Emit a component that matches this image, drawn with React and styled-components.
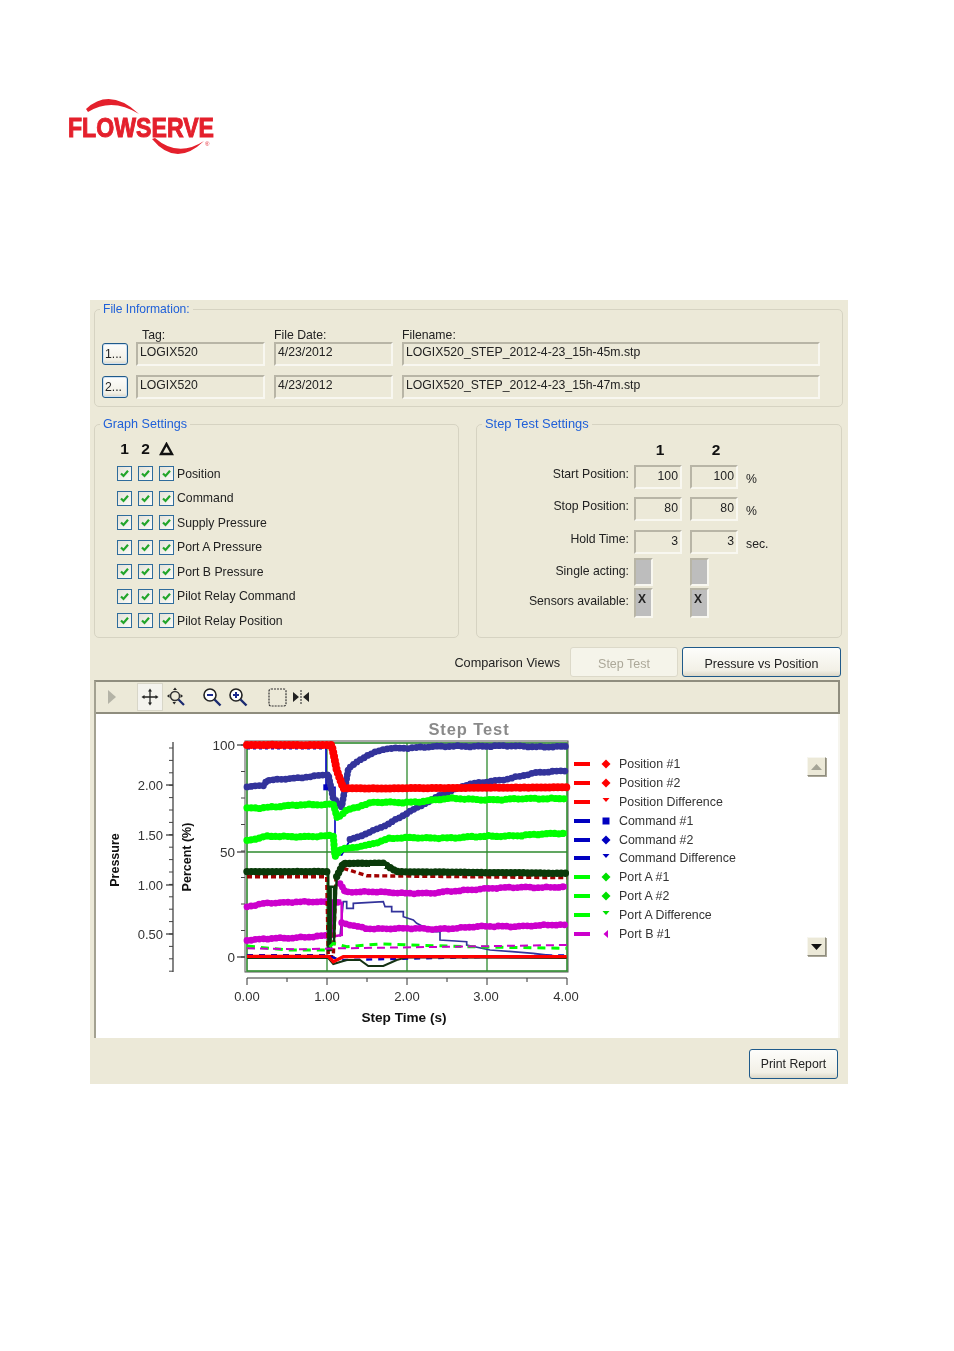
import React from "react";
import styled, { createGlobalStyle } from "styled-components";

const GlobalStyle = createGlobalStyle`
  html, body { margin: 0; padding: 0; background: #fff; }
  body { font-family: "Liberation Sans", Arial, sans-serif; color: #222; }
`;

const Page = styled.div`
  width: 954px;
  height: 1351px;
  overflow: hidden;
  filter: blur(0.35px);
`;

const Header = styled.header`
  height: 300px;
  padding: 98px 0 0 66px;
  box-sizing: border-box;
`;

const Panel = styled.main`
  width: 758px;
  height: 784px;
  margin-left: 90px;
  padding: 1px 5px 0 4px;
  box-sizing: border-box;
  background: #ece9d8;
  font-size: 12.25px;
`;

const Group = styled.fieldset`
  margin: 0;
  padding: 0;
  min-width: 0;
  box-sizing: border-box;
  border: 1.5px solid #d6d3c2;
  border-radius: 5px;
  width: ${(p) => p.$width || "auto"};
  height: ${(p) => p.$height};
`;

const GroupTitle = styled.legend`
  margin-left: 5px;
  padding: 0 3px 0 3px;
  font-size: ${(p) => p.$size || 12.6}px;
  line-height: 16px;
  color: #2060d8;
`;

const FileRows = styled.div`
  display: flex;
  flex-direction: column;
  gap: 9px;
  padding: 11px 0 0 7px;
`;

const FileGrid = styled.div`
  display: grid;
  grid-template-columns: 25px 129px 119px 418px;
  column-gap: 9px;
  align-items: center;
`;

const FileHead = styled(FileGrid)`
  height: 15px;
  margin-bottom: -10px;
  line-height: 15px;
`;

const HeadCell = styled.span`
  padding-left: ${(p) => p.$indent || 0}px;
`;

const Sunken = styled.div`
  box-sizing: border-box;
  border: 2px solid;
  border-color: #b8b5a6 #f8f7f0 #f8f7f0 #b8b5a6;
  background: #ece9d8;
`;

const FileField = styled(Sunken)`
  height: 24px;
  padding: 1px 0 0 2px;
  line-height: 15px;
  white-space: nowrap;
`;

const Button = styled.button`
  box-sizing: border-box;
  padding: 0;
  font: inherit;
  color: #222;
  background: linear-gradient(#fdfdfb, #f2f0e6 80%, #dcd8c8);
  border: 1.5px solid #1f5a8a;
  border-radius: 3px;
  width: ${(p) => p.$width}px;
  height: ${(p) => p.$height}px;
`;

const PickButton = styled(Button)`
  text-align: left;
  padding-left: 2px;
  box-shadow: inset 0 0 0 1px #cfe0f2;
`;

const ViewButton = styled(Button)`
  padding-top: 3px;
  font-size: 12.5px;
`;

const DisabledButton = styled(ViewButton)`
  color: #aca899;
  background: #f5f4ea;
  border-color: #dcd9c9;
`;

const SettingsRow = styled.div`
  display: flex;
  gap: 17px;
  margin-top: 9px;
`;

const CheckList = styled.div`
  padding: 5px 0 0 22px;
`;

const CheckRow = styled.div`
  display: flex;
  align-items: center;
  height: 24.5px;
`;

const ColHead = styled.b`
  width: 15px;
  margin-right: 6px;
  text-align: center;
  font-size: 15.5px;
  color: #111;
`;

const CheckBox = styled.span`
  box-sizing: border-box;
  width: 15px;
  height: 15px;
  margin-right: ${(p) => (p.$last ? 3 : 6)}px;
  display: flex;
  align-items: center;
  justify-content: center;
  border: 1.5px solid #2f6c9c;
  background: linear-gradient(135deg, #e4e2d8, #fbfbf8);
`;

const StepGrid = styled.div`
  display: grid;
  grid-template-columns: 152px 53px 56px auto;
  grid-template-rows: 27px 32px 33px 28px 30px;
  padding-top: 6px;
`;

const StepHead = styled.b`
  grid-column: ${(p) => p.$col};
  justify-self: end;
  width: 48px;
  padding-left: 4px;
  box-sizing: border-box;
  text-align: center;
  font-size: 15.5px;
  line-height: 24px;
  color: #111;
`;

const StepLabel = styled.span`
  grid-column: 1;
  text-align: right;
  line-height: 17px;
  padding-top: ${(p) => p.$top || 1}px;
`;

const StepField = styled(Sunken)`
  justify-self: end;
  width: 48px;
  height: 24px;
  text-align: right;
  padding: 1px 2px 0 0;
  line-height: 16px;
`;

const FlagField = styled(Sunken)`
  justify-self: start;
  margin-left: 5px;
  width: 19px;
  height: ${(p) => p.$height}px;
  background: #bdbdbd;
  font-weight: bold;
  font-size: 12px;
  line-height: 18px;
  padding-left: 2px;
`;

const FlagFieldAlt = styled(FlagField)`
  margin-left: 8px;
`;

const Unit = styled.span`
  padding-left: 8px;
  line-height: 28px;
`;

const ViewsRow = styled.div`
  display: flex;
  justify-content: flex-end;
  align-items: center;
  gap: 4px;
  margin-top: 9px;
  padding-right: 2px;
`;

const ViewsLabel = styled.span`
  margin: 2px 6px 0 0;
  font-size: 12.7px;
`;

const ChartFrame = styled.section`
  box-sizing: border-box;
  width: 746px;
  height: 358px;
  margin-top: 3px;
  border-left: 2px solid #a3a191;
  border-top: 2px solid #8f8d7e;
`;

const Toolbar = styled.div`
  box-sizing: border-box;
  height: 32px;
  display: flex;
  align-items: center;
  padding-left: 4px;
  border-bottom: 2px solid #8f8d7e;
  border-right: 2px solid #8f8d7e;
`;

const ToolSlot = styled.span`
  width: ${(p) => p.$width || 24}px;
  height: 28px;
  margin-left: ${(p) => p.$gap || 0}px;
  display: flex;
  align-items: center;
  justify-content: center;
  background: ${(p) => (p.$active ? "#f4f3ee" : "transparent")};
  border: ${(p) => (p.$active ? "1px solid #d8d6c8" : "none")};
  box-sizing: border-box;
`;

const ChartBody = styled.div`
  box-sizing: border-box;
  height: 324px;
  display: flex;
  background: #fff;
  border-right: 2px solid #f6f5ee;
`;

const ChartSvg = styled.svg`
  display: block;
  width: 486px;
  height: 324px;
  flex: none;
  font-family: "Liberation Sans", Arial, sans-serif;
`;

const Legend = styled.ul`
  list-style: none;
  margin: 0 0 0 -8px;
  padding: 40.5px 0 0;
  width: 233px;
  flex: none;
`;

const LegendRow = styled.li`
  display: flex;
  align-items: center;
  height: 18.9px;
  font-size: 12.4px;
  color: #333;
`;

const Swatch = styled.span`
  width: 16px;
  height: 4px;
  background: ${(p) => p.$color};
  flex: none;
`;

const MarkerSlot = styled.span`
  width: 16px;
  margin: 0 5px 0 8px;
  display: flex;
  justify-content: center;
`;

const ScrollColumn = styled.div`
  display: flex;
  flex-direction: column;
  justify-content: space-between;
  box-sizing: border-box;
  height: 324px;
  padding: 43px 0 82px;
`;

const ScrollButton = styled.span`
  box-sizing: border-box;
  width: 19px;
  height: 19px;
  display: flex;
  align-items: center;
  justify-content: center;
  background: #ece9d8;
  border: 1px solid;
  border-color: #f7f6ef #8f8d7e #8f8d7e #f7f6ef;
  box-shadow: 1px 1px 0 #aca899;
`;

const Footer = styled.div`
  display: flex;
  justify-content: flex-end;
  padding: 11px 5px 0 0;
`;

const Logo = () => (
  <svg width="190" height="60" viewBox="66 98 190 60">
    <path d="M86 109 Q110 87 139 114 Q112 97 88 112 Z" fill="#e4202c" />
    <path d="M152 139 Q176 168 204 141 Q178 158 155 138 Z" fill="#e4202c" />
    <text x="68" y="137" fontFamily="Liberation Sans" fontWeight="bold" fontSize="28" fill="#e4202c" stroke="#e4202c" strokeWidth="1" textLength="146" lengthAdjust="spacingAndGlyphs">FLOWSERVE</text>
    <text x="205" y="146" fontFamily="Liberation Sans" fontSize="6" fill="#e4202c">®</text>
  </svg>
);

const Check = () => (
  <svg width="11" height="11" viewBox="0 0 11 11">
    <path d="M2 5.5 L4.5 8 L9 2.8" fill="none" stroke="#22a52a" strokeWidth="2.2" />
  </svg>
);

const Delta = () => (
  <svg width="15" height="14" viewBox="0 0 15 14">
    <path d="M7.5 2 L13 12 H2 Z" fill="none" stroke="#111" strokeWidth="2.4" />
  </svg>
);

const PlayIcon = () => (
  <svg width="10" height="16" viewBox="0 0 10 16"><path d="M1 1 L9 8 L1 15 Z" fill="#b4b3a6" /></svg>
);

const PanIcon = () => (
  <svg width="18" height="18" viewBox="0 0 18 18">
    <path d="M9 2 V16 M2 9 H16" stroke="#222" strokeWidth="1.3" />
    <path d="M9 0.5 L11 3.5 H7 Z M9 17.5 L7 14.5 H11 Z M0.5 9 L3.5 7 V11 Z M17.5 9 L14.5 11 V7 Z" fill="#222" />
  </svg>
);

const AutoIcon = () => (
  <svg width="20" height="20" viewBox="0 0 20 20">
    <circle cx="9" cy="9" r="4.5" fill="none" stroke="#333" strokeWidth="1.5" />
    <path d="M12.5 12.5 L18 18" stroke="#1a2a70" strokeWidth="2.2" />
    <path d="M9 0.5 L11 3 H7 Z M1 9 L3.5 7 V11 Z M17 9 L14.5 11 V7 Z M6.5 15 H10 L8.2 17.5 Z" fill="#222" />
  </svg>
);

const ZoomIcon = ({ plus }) => (
  <svg width="20" height="20" viewBox="0 0 20 20">
    <circle cx="8" cy="8" r="6" fill="#fff" stroke="#222" strokeWidth="1.6" />
    <path d="M12.5 12.5 L18.5 18.5" stroke="#1a2a70" strokeWidth="2.4" />
    <path d={plus ? "M5 8 H11 M8 5 V11" : "M5 8 H11"} stroke="#1a2a90" strokeWidth="2" />
  </svg>
);

const BoxIcon = () => (
  <svg width="19" height="19" viewBox="0 0 19 19">
    <rect x="1" y="1" width="17" height="17" rx="2" fill="none" stroke="#333" strokeWidth="1.2" strokeDasharray="2 1" />
  </svg>
);

const SplitIcon = () => (
  <svg width="18" height="14" viewBox="0 0 18 14">
    <path d="M1 2 L7 7 L1 12 Z M17 2 L11 7 L17 12 Z" fill="#222" />
    <path d="M9 0 V14" stroke="#444" strokeWidth="1.2" strokeDasharray="2 1" />
  </svg>
);

const Marker = ({ kind, color }) => {
  const shapes = {
    diamond: "M5 0.5 L9.5 5 L5 9.5 L0.5 5 Z",
    square: "M1.5 1.5 H8.5 V8.5 H1.5 Z",
    down: "M1.5 1 H8.5 L5 5 Z",
    left: "M7 1 V9 L2.5 5 Z",
  };
  return (
    <svg width="10" height="10" viewBox="0 0 10 10"><path d={shapes[kind]} fill={color} /></svg>
  );
};

const ChevronUp = ({ color }) => (
  <svg width="11" height="6" viewBox="0 0 11 6"><path d="M5.5 0 L11 6 H0 Z" fill={color} /></svg>
);

const ChevronDown = ({ color }) => (
  <svg width="11" height="6" viewBox="0 0 11 6"><path d="M5.5 6 L11 0 H0 Z" fill={color} /></svg>
);

// zoomed crop coordinates of the plot, mapped back to the page
const px = (x) => 200 + x / 3;
const py = (y) => 730 + y / 3;

const wobble = (x, seed) =>
  Math.sin(x * 0.31 + seed) * 0.5 + Math.sin(x * 0.83 + seed * 2) * 0.4 + Math.sin(x * 0.09 + seed * 3) * 0.5;

const pathOf = (pts, seed, amp) => {
  const out = [];
  for (let i = 0; i < pts.length - 1; i++) {
    const [x1, y1] = pts[i];
    const [x2, y2] = pts[i + 1];
    const steps = Math.max(1, Math.round(Math.abs(x2 - x1) / 9));
    for (let s = 0; s < steps; s++) {
      const t = s / steps;
      const x = px(x1 + (x2 - x1) * t);
      const y = py(y1 + (y2 - y1) * t);
      out.push(`${x.toFixed(1)},${(y + wobble(x, seed) * amp).toFixed(1)}`);
    }
  }
  const last = pts[pts.length - 1];
  out.push(`${px(last[0]).toFixed(1)},${py(last[1]).toFixed(1)}`);
  return out.join(" ");
};

const Thick = ({ pts, color, seed = 1, width = 5, amp = 0.8 }) => {
  const line = pathOf(pts, seed, amp);
  return (
    <g fill="none" stroke={color} strokeLinejoin="round">
      <polyline points={line} strokeWidth={width} />
      <polyline points={line} strokeWidth={width + 1.8} strokeLinecap="round" strokeDasharray="0 4.2" />
    </g>
  );
};

const Thin = ({ pts, color, width = 1.3, dash }) => (
  <polyline
    points={pts.map(([x, y]) => `${px(x).toFixed(1)},${py(y).toFixed(1)}`).join(" ")}
    fill="none"
    stroke={color}
    strokeWidth={width}
    strokeDasharray={dash}
  />
);

const RED = "#ff0000";
const NAVY = "#33339b";
const BLUE = "#0000c0";
const GREEN = "#00ff00";
const PURPLE = "#cc00cc";
const FOREST = "#0a3a0a";
const GRID = "#2e8b2e";

const Chart = () => {
  const pctTicks = Array.from({ length: 9 }, (_, i) => 745 + i * 26.5);
  const pressTicks = Array.from({ length: 19 }, (_, i) => 748 + i * 12.4).filter((y) => y < 973);
  const timeTicks = Array.from({ length: 9 }, (_, i) => 247 + i * 40);
  return (
    <ChartSvg viewBox="96 714 486 324">
      <text x="469" y="735" textAnchor="middle" fontSize="16.5" fontWeight="bold" fill="#8a8a8a" letterSpacing="0.9">Step Test</text>

      {/* pressure axis */}
      <path d="M173 742 V972" stroke="#333" strokeWidth="1.2" />
      {pressTicks.map((y) => (
        <path key={y} d={`M169 ${y} H173`} stroke="#444" strokeWidth="1" />
      ))}
      {[["2.00", 785], ["1.50", 835], ["1.00", 885], ["0.50", 934]].map(([label, y]) => (
        <g key={label}>
          <path d={`M166 ${y} H173`} stroke="#333" strokeWidth="1.2" />
          <text x="163" y={y + 5} textAnchor="end" fontSize="13" fill="#333">{label}</text>
        </g>
      ))}
      <text transform="translate(119 860) rotate(-90)" textAnchor="middle" fontSize="12.5" fontWeight="bold" fill="#111">Pressure</text>
      <text transform="translate(191 857) rotate(-90)" textAnchor="middle" fontSize="12.5" fontWeight="bold" fill="#111">Percent (%)</text>

      {/* percent axis */}
      {pctTicks.map((y) => (
        <path key={y} d={`M241 ${y} H245`} stroke="#444" strokeWidth="1" />
      ))}
      {[["100", 745], ["50", 852], ["0", 957]].map(([label, y]) => (
        <g key={label}>
          <path d={`M237 ${y} H245`} stroke="#333" strokeWidth="1.2" />
          <text x="235" y={y + 5} textAnchor="end" fontSize="13.5" fill="#333">{label}</text>
        </g>
      ))}

      {/* plot frame */}
      <rect x="245" y="741" width="323" height="231" fill="#fff" stroke="#555" strokeWidth="1" />
      <rect x="247" y="743" width="320" height="228" fill="none" stroke={GRID} strokeWidth="1.6" />
      <path d="M327 743 V971 M407 743 V971 M487 743 V971 M247 852 H567" stroke={GRID} strokeWidth="1.3" fill="none" />

      {/* time axis */}
      <path d="M247 978 H567" stroke="#333" strokeWidth="1" />
      {timeTicks.map((x) => (
        <path key={x} d={`M${x} 978 V${(x - 247) % 80 === 0 ? 985 : 982}`} stroke="#333" strokeWidth="1" />
      ))}
      {[["0.00", 247], ["1.00", 327], ["2.00", 407], ["3.00", 486], ["4.00", 566]].map(([label, x]) => (
        <text key={label} x={x} y="1001" textAnchor="middle" fontSize="13" fill="#333">{label}</text>
      ))}
      <text x="404" y="1022" textAnchor="middle" fontSize="13.6" fontWeight="bold" fill="#111">Step Time (s)</text>

      {/* traces */}
      <Thin pts={[[378, 50], [378, 172], [405, 172], [405, 370], [425, 375], [450, 330]]} color={BLUE} width={1.6} />
      <Thin pts={[[141, 53], [378, 53]]} color={BLUE} width={3.4} dash="3 3" />
      <Thin pts={[[370, 172], [400, 172]]} color={BLUE} width={6} />
      <Thick seed={1} pts={[[141, 170], [190, 165], [200, 150], [300, 145], [385, 132], [400, 205], [425, 230], [445, 115], [500, 78], [560, 55], [800, 48], [1100, 50]]} color={NAVY} />
      <Thick seed={2} pts={[[450, 330], [570, 280], [640, 240], [720, 195], [800, 165], [900, 150], [1000, 130], [1100, 122]]} color={NAVY} />
      <Thin pts={[[420, 620], [430, 515], [440, 515], [440, 535], [460, 535], [460, 520], [550, 515], [555, 530], [575, 530], [575, 545], [610, 545], [610, 560], [640, 570], [650, 580], [700, 605], [720, 605], [720, 630], [800, 635], [800, 645], [870, 660], [1000, 670], [1100, 682]]} color={NAVY} width={1.7} />
      <Thick seed={3} pts={[[141, 235], [250, 228], [400, 222], [412, 262], [440, 240], [520, 218], [660, 215], [760, 205], [900, 210], [1000, 205], [1100, 205]]} color={GREEN} width={5.4} />
      <Thick seed={4} pts={[[141, 332], [200, 320], [400, 318], [405, 380], [420, 360], [500, 345], [570, 325], [800, 322], [1100, 310]]} color={GREEN} width={5.4} />
      <Thick seed={5} pts={[[141, 530], [200, 518], [425, 515]]} color={PURPLE} width={5} />
      <Thick seed={5} pts={[[420, 460], [435, 485], [700, 490], [850, 475], [1100, 470]]} color={PURPLE} width={5} />
      <Thin pts={[[395, 515], [395, 620], [425, 615], [425, 515]]} color={PURPLE} width={2.6} />
      <Thick seed={6} pts={[[141, 630], [250, 625], [400, 615]]} color={PURPLE} width={5} />
      <Thick seed={6} pts={[[425, 580], [500, 595], [700, 597], [850, 590], [1100, 585]]} color={PURPLE} width={5} />
      <Thin pts={[[141, 440], [380, 440], [385, 680], [400, 680], [408, 440], [430, 415], [500, 437], [1100, 443]]} color="#a00000" width={3.4} dash="5 3" />
      <Thick seed={7} amp={0.2} width={5.6} pts={[[141, 425], [385, 425]]} color={FOREST} />
      <Thin pts={[[385, 425], [385, 660], [392, 660], [392, 470], [402, 470], [402, 640], [410, 440]]} color={FOREST} width={2.4} />
      <Thick seed={7} amp={0.2} width={5.6} pts={[[410, 440], [430, 400], [550, 400], [590, 425], [1100, 430]]} color={FOREST} />
      <Thin pts={[[510, 411], [555, 411]]} color="#fff" width={2} />
      <Thin pts={[[141, 648], [260, 660], [380, 660], [400, 640], [440, 650], [540, 642], [800, 650], [1100, 655]]} color={GREEN} width={3} dash="8 6" />
      <Thin pts={[[141, 655], [300, 658], [420, 655], [1100, 645]]} color={PURPLE} width={2} dash="8 5" />
      <Thin pts={[[141, 676], [380, 676], [420, 690], [1100, 676]]} color={BLUE} width={2.4} dash="6 6" />
      <Thin pts={[[141, 684], [385, 684], [400, 702], [440, 690], [480, 690], [505, 708], [550, 708], [590, 690], [620, 682], [1100, 684]]} color="#143214" width={2} />
      <Thin pts={[[141, 679], [385, 679], [400, 695], [430, 680], [1100, 680]]} color={RED} width={3.2} />
      <Thick seed={8} amp={0.15} width={6.2} pts={[[141, 45], [395, 45], [410, 120], [430, 175], [560, 175], [1100, 172]]} color={RED} />
    </ChartSvg>
  );
};

const checks = [
  "Position",
  "Command",
  "Supply Pressure",
  "Port A Pressure",
  "Port B Pressure",
  "Pilot Relay Command",
  "Pilot Relay Position",
];

const legendItems = [
  ["Position #1", "#ff0000", "#ff0000", "diamond"],
  ["Position #2", "#ff0000", "#ff0000", "diamond"],
  ["Position Difference", "#ff0000", "#ff0000", "down"],
  ["Command #1", "#0000c0", "#0000c0", "square"],
  ["Command #2", "#0000c0", "#0000c0", "diamond"],
  ["Command Difference", "#0000c0", "#0000c0", "down"],
  ["Port A #1", "#00ff00", "#00e000", "diamond"],
  ["Port A #2", "#00ff00", "#00e000", "diamond"],
  ["Port A Difference", "#00ff00", "#00e000", "down"],
  ["Port B #1", "#cc00cc", "#cc00cc", "left"],
];

const files = [
  ["1...", "LOGIX520", "4/23/2012", "LOGIX520_STEP_2012-4-23_15h-45m.stp"],
  ["2...", "LOGIX520", "4/23/2012", "LOGIX520_STEP_2012-4-23_15h-47m.stp"],
];

const App = () => (
  <Page>
    <GlobalStyle />
    <Header>
      <Logo />
    </Header>
    <Panel>
      <Group $height="106px">
        <GroupTitle $size={12.1}>File Information:</GroupTitle>
        <FileRows>
          <FileHead>
            <span />
            <HeadCell $indent={6}>Tag:</HeadCell>
            <span>File Date:</span>
            <span>Filename:</span>
          </FileHead>
          {files.map(([pick, tag, date, name]) => (
            <FileGrid key={pick}>
              <PickButton $width={26} $height={22}>{pick}</PickButton>
              <FileField>{tag}</FileField>
              <FileField>{date}</FileField>
              <FileField>{name}</FileField>
            </FileGrid>
          ))}
        </FileRows>
      </Group>

      <SettingsRow>
        <Group $width="365px" $height="222px">
          <GroupTitle>Graph Settings</GroupTitle>
          <CheckList>
            <CheckRow>
              <ColHead>1</ColHead>
              <ColHead>2</ColHead>
              <Delta />
            </CheckRow>
            {checks.map((label) => (
              <CheckRow key={label}>
                <CheckBox><Check /></CheckBox>
                <CheckBox><Check /></CheckBox>
                <CheckBox $last><Check /></CheckBox>
                {label}
              </CheckRow>
            ))}
          </CheckList>
        </Group>

        <Group $width="366px" $height="222px">
          <GroupTitle $size={12.9}>Step Test Settings</GroupTitle>
          <StepGrid>
            <StepHead $col={2}>1</StepHead>
            <StepHead $col={3}>2</StepHead>
            <span />
            <StepLabel>Start Position:</StepLabel>
            <StepField>100</StepField>
            <StepField>100</StepField>
            <Unit>%</Unit>
            <StepLabel>Stop Position:</StepLabel>
            <StepField>80</StepField>
            <StepField>80</StepField>
            <Unit>%</Unit>
            <StepLabel>Hold Time:</StepLabel>
            <StepField>3</StepField>
            <StepField>3</StepField>
            <Unit>sec.</Unit>
            <StepLabel $top={5}>Single acting:</StepLabel>
            <FlagField $height={28} />
            <FlagFieldAlt $height={28} />
            <span />
            <StepLabel $top={5}>Sensors available:</StepLabel>
            <FlagField $height={30}>X</FlagField>
            <FlagFieldAlt $height={30}>X</FlagFieldAlt>
            <span />
          </StepGrid>
        </Group>
      </SettingsRow>

      <ViewsRow>
        <ViewsLabel>Comparison Views</ViewsLabel>
        <DisabledButton $width={108} $height={30}>Step Test</DisabledButton>
        <ViewButton $width={159} $height={30}>Pressure vs Position</ViewButton>
      </ViewsRow>

      <ChartFrame>
        <Toolbar>
          <ToolSlot $width={24}><PlayIcon /></ToolSlot>
          <ToolSlot $gap={13} $width={26} $active><PanIcon /></ToolSlot>
          <ToolSlot $gap={1}><AutoIcon /></ToolSlot>
          <ToolSlot $gap={12}><ZoomIcon /></ToolSlot>
          <ToolSlot $gap={2}><ZoomIcon plus /></ToolSlot>
          <ToolSlot $gap={15}><BoxIcon /></ToolSlot>
          <ToolSlot $gap={0}><SplitIcon /></ToolSlot>
        </Toolbar>
        <ChartBody>
          <Chart />
          <Legend>
            {legendItems.map(([label, line, mark, kind]) => (
              <LegendRow key={label}>
                <Swatch $color={line} />
                <MarkerSlot><Marker kind={kind} color={mark} /></MarkerSlot>
                {label}
              </LegendRow>
            ))}
          </Legend>
          <ScrollColumn>
            <ScrollButton><ChevronUp color="#a5a497" /></ScrollButton>
            <ScrollButton><ChevronDown color="#111" /></ScrollButton>
          </ScrollColumn>
        </ChartBody>
      </ChartFrame>

      <Footer>
        <Button $width={89} $height={30}>Print Report</Button>
      </Footer>
    </Panel>
  </Page>
);

export default App;
